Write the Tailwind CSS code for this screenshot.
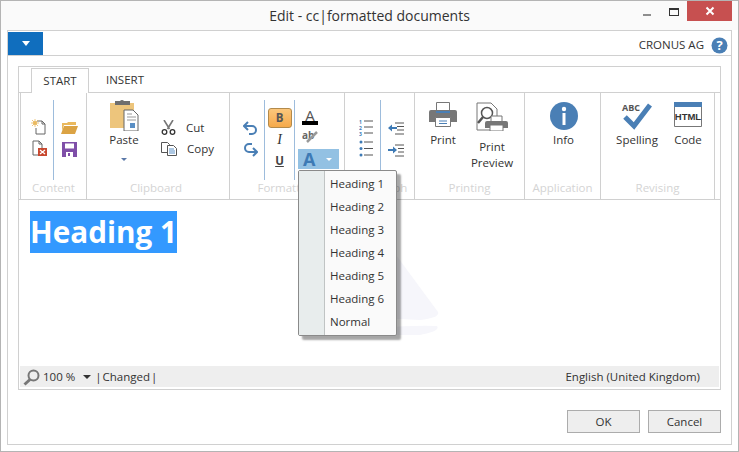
<!DOCTYPE html>
<html lang="en">
<head>
  <meta charset="UTF-8">
  <script src="https://cdn.jsdelivr.net/npm/@tailwindcss/browser@4"></script>
  <title>Edit - cc|formatted documents</title>
</head>
<body class="bg-white">
  <div class="w-[739px] h-[452px] flex flex-col bg-white border border-[#b4b4b4] font-['Open_Sans',sans-serif] text-[11.5px] text-[#333] overflow-hidden relative">

    <!-- title bar -->
    <div class="h-[29px] shrink-0 bg-[#fafafa] flex relative">
      <div class="flex-1 text-center text-[14px] leading-[29px] text-[#333]">Edit - cc|formatted documents</div>
      <div class="absolute right-[6px] top-0 flex items-start">
        <div class="w-[8px] h-[2px] mt-[13px] mr-[18px] bg-[#8e8e8e]"></div>
        <div class="w-[10px] h-[8px] mt-[7px] mr-[8px] border border-t-2 border-[#333]"></div>
        <div class="w-[45px] h-[20px] bg-[#c75050] flex items-center justify-center">
          <svg width="10" height="10" viewBox="0 0 10 10"><path d="M1.500 1.500l7 7M8.500 1.500l-7 7" stroke="#fff" stroke-width="2"/></svg>
        </div>
      </div>
    </div>

    <div class="mx-[6px] h-[415px] border border-[#d0d0d0] flex flex-col">
      <!-- header bar -->
      <div class="h-[25px] shrink-0 border-b border-[#d0d0d0] flex items-end relative">
        <div class="w-[35px] h-[23px] bg-[#106ebe] flex items-center justify-center">
          <div class="w-0 h-0 border-x-[4px] border-x-transparent border-t-[5px] border-t-white"></div>
        </div>
        <div class="flex-1"></div>
        <div class="flex items-center pr-[3px] h-[20px]">
          <span class="text-[#333] mr-[7px]">CRONUS AG</span>
          <svg width="17" height="17" viewBox="0 0 17 17"><circle cx="8.500" cy="8.500" r="8" fill="#4a7fb5"/><text x="8.500" y="13" text-anchor="middle" font-size="13" font-weight="700" fill="#fff" font-family="Open Sans">?</text></svg>
        </div>
      </div>

      <div class="mx-[10px] mt-[10px] h-[324px] border border-[#d0d0d0] flex flex-col">
        <!-- tabs -->
        <div class="h-[25px] shrink-0 flex pl-[12px] pt-[1px] relative">
          <div class="w-[58px] h-[25px] border border-b-0 border-[#d0d0d0] bg-white text-center leading-[24px] z-10">START</div>
          <div class="w-[72px] text-center leading-[24px]">INSERT</div>
        </div>
        <!-- ribbon -->
        <div class="h-[108px] shrink-0 border-t border-b border-[#d0d0d0] flex pl-[1px]">

          <!-- Content -->
          <div class="w-[67px] shrink-0 border-r border-l border-[#d0d0d0] flex flex-col">
            <div class="h-[87px] flex pt-[7px]">
              <div class="w-[32px] flex flex-col pl-[10px] pt-[19px] gap-[5px]">
                <svg width="16" height="16" viewBox="0 0 16 16"><path d="M6 2h5l3 3v10H5V9" fill="#fff" stroke="#666"/><path d="M11 2v3h3" fill="none" stroke="#666"/><circle cx="4" cy="4" r="2" fill="#eab95e"/><path d="M4 0v8M0 4h8M1 1l6 6M7 1L1 7" stroke="#eab95e" stroke-width=".8"/></svg>
                <svg width="16" height="17" viewBox="0 0 16 17" class="ml-[1px]"><path d="M1 1h6l3 3v11H1z" fill="#fff" stroke="#666"/><path d="M7 1v3h3" fill="none" stroke="#666"/><rect x="6" y="8" width="9" height="8" fill="#c8482f"/><path d="M8 10l5 4M13 10l-5 4" stroke="#fff" stroke-width="1.300"/></svg>
              </div>
              <div class="w-px h-[80px] bg-[#9dbcdc]"></div>
              <div class="flex flex-col pl-[7px] pt-[20px] gap-[8px]">
                <svg width="17" height="14" viewBox="0 0 17 14"><path d="M1 3h5l1-1h8v3H3L1 11z" fill="#eab95e"/><path d="M3 6h14l-3 8H0z" fill="#dba344"/></svg>
                <svg width="15" height="15" viewBox="0 0 15 15" class="ml-[1px]"><path d="M0 0h15v15H0z" fill="#7f4fa8"/><path d="M3 1.500h9v5H3z" fill="#fff"/><path d="M4 10h7v5H4z" fill="#fff"/><path d="M6 11h2v3H6z" fill="#7f4fa8"/></svg>
              </div>
            </div>
            <div class="text-center text-[#d4d4d4] leading-[16px]">Content</div>
          </div>

          <!-- Clipboard -->
          <div class="w-[143px] shrink-0 border-r border-[#d0d0d0] flex flex-col">
            <div class="h-[87px] flex pt-[7px]">
              <div class="w-[74px] flex flex-col items-center">
                <svg width="29" height="31" viewBox="0 0 29 31"><path d="M0 3h24v25H0z" fill="#edc57c"/><path d="M5 1h5a2.500 2.500 0 0 1 4 0h6v4H5z" fill="#6e6e6e"/><path d="M14 10h9l5 5v16H14z" fill="#fff" stroke="#666"/><path d="M17 14h5M17 17h9M17 20h9" stroke="#999"/><rect x="20" y="23" width="5" height="5" fill="#5a8fc5"/></svg>
                <div class="leading-[16px] mt-[1px]">Paste</div>
                <div class="w-0 h-0 mt-[10px] border-x-[3px] border-x-transparent border-t-[3px] border-t-[#5a78a8]"></div>
              </div>
              <div class="flex flex-col pt-[20px] gap-[6px]">
                <div class="flex items-center h-[15px]">
                  <svg width="15" height="15" viewBox="0 0 15 15"><path d="M3 0l5.500 9M12 0L6.500 9" stroke="#777" stroke-width="1.600"/><circle cx="3.500" cy="12" r="2.300" fill="none" stroke="#333" stroke-width="1.300"/><circle cx="11.500" cy="12" r="2.300" fill="none" stroke="#333" stroke-width="1.300"/></svg>
                  <span class="ml-[10px]">Cut</span>
                </div>
                <div class="flex items-center h-[15px]">
                  <svg width="16" height="14" viewBox="0 0 16 14"><path d="M.5.500h6l2 2v8H.5z" fill="#fff" stroke="#555"/><path d="M6.500 3.500h6l3 3v7h-9z" fill="#fff" stroke="#555"/><path d="M8 7h5M8 9h6M8 11h6" stroke="#5a8fc5"/></svg>
                  <span class="ml-[10px]">Copy</span>
                </div>
              </div>
            </div>
            <div class="text-center text-[#d4d4d4] leading-[16px] pr-[4px]">Clipboard</div>
          </div>

          <!-- Formatting -->
          <div class="w-[115px] shrink-0 border-r border-[#d0d0d0] flex flex-col">
            <div class="h-[87px] flex pt-[7px]">
              <div class="w-[34px] flex flex-col pl-[13px] pt-[21px] gap-[8px]">
                <svg width="15" height="14" viewBox="0 0 15 14"><path d="M5 1L1 5l4 4" fill="none" stroke="#4a7fb5" stroke-width="2"/><path d="M1 5h8a4 4 0 0 1 0 8H6" fill="none" stroke="#4a7fb5" stroke-width="2"/></svg>
                <svg width="15" height="14" viewBox="0 0 15 14"><path d="M10 5l4 4-4 4" fill="none" stroke="#4a7fb5" stroke-width="2"/><path d="M14 9H6a4 4 0 0 1 0-8h3" fill="none" stroke="#4a7fb5" stroke-width="2"/></svg>
              </div>
              <div class="w-px h-[80px] bg-[#9dbcdc]"></div>
              <div class="w-[29px] flex flex-col items-center pt-[8px]">
                <div class="w-[24px] h-[20px] rounded-[3px] border border-[#b28a4c] bg-linear-to-b from-[#fbc77c] to-[#f5a94a] text-center font-bold leading-[18px] text-[#555]">B</div>
                <div class="h-[21px] leading-[21px] mt-[1px] italic text-[14px] font-['Liberation_Serif',serif]">I</div>
                <div class="h-[21px] leading-[21px] font-bold underline text-[#444]">U</div>
              </div>
              <div class="w-px h-[80px] bg-[#9dbcdc]"></div>
              <div class="flex flex-col pl-[3px] pt-[9px]">
                <div class="w-[41px] flex flex-col items-start pl-[4px]">
                  <div class="text-[15px] leading-[12px] h-[12px] w-[16px] text-center text-[#555]">A</div>
                  <div class="w-[16px] h-[4px] bg-black"></div>
                  <svg width="17" height="14" viewBox="0 0 17 14" class="mt-[4px]"><text x="0" y="10" font-size="10" font-weight="700" fill="#666" font-family="Open Sans">ab</text><path d="M5 13L15 3" stroke="#999" stroke-width="2.500"/></svg>
                </div>
                <div class="w-[41px] h-[20px] mt-[6px] bg-[#93c1e3] flex items-center pl-[5px]">
                  <span class="text-[18px] leading-[20px] font-bold text-[#3d7ab5]">A</span>
                  <div class="ml-[11px] w-0 h-0 border-x-[3px] border-x-transparent border-t-[3px] border-t-white"></div>
                </div>
              </div>
            </div>
            <div class="text-center text-[#d4d4d4] leading-[16px]">Formatting</div>
          </div>

          <!-- Paragraph -->
          <div class="w-[70px] shrink-0 border-r border-[#d0d0d0] flex flex-col">
            <div class="h-[87px] flex pt-[7px]">
              <div class="w-[35px] flex flex-col pl-[14px] pt-[19px] gap-[4px]">
                <svg width="14" height="17" viewBox="0 0 14 17"><text x="0" y="5" font-size="5" font-weight="700" fill="#3d7ab5" font-family="Open Sans">1</text><text x="0" y="11" font-size="5" font-weight="700" fill="#3d7ab5" font-family="Open Sans">2</text><text x="0" y="17" font-size="5" font-weight="700" fill="#3d7ab5" font-family="Open Sans">3</text><path d="M5 2h9M5 8h9M5 14h9" stroke="#555"/></svg>
                <svg width="14" height="17" viewBox="0 0 14 17"><circle cx="2" cy="2" r="1.500" fill="#3d7ab5"/><circle cx="2" cy="8.500" r="1.500" fill="#3d7ab5"/><circle cx="2" cy="15" r="1.500" fill="#3d7ab5"/><path d="M5 2h9M5 8.500h9M5 15h9" stroke="#555"/></svg>
              </div>
              <div class="w-px h-[80px] bg-[#9dbcdc]"></div>
              <div class="flex flex-col pl-[7px] pt-[22px] gap-[9px]">
                <svg width="16" height="13" viewBox="0 0 16 13"><path d="M7 1h9M9 4.500h7M9 8h7M7 12h9" stroke="#555"/><path d="M0 6l4-3.500v2.500h5v2H4v2.500z" fill="#3d7ab5"/></svg>
                <svg width="16" height="13" viewBox="0 0 16 13"><path d="M7 1h9M10 4.500h6M10 8h6M7 12h9" stroke="#555"/><path d="M9 6L5 2.500V5H0v2h5v2.500z" fill="#3d7ab5"/></svg>
              </div>
            </div>
            <div class="text-center text-[#d4d4d4] leading-[16px]">Paragraph</div>
          </div>

          <!-- Printing -->
          <div class="w-[110px] shrink-0 border-r border-[#d0d0d0] flex flex-col">
            <div class="h-[87px] flex pt-[9px]">
              <div class="w-[56px] flex flex-col items-center">
                <svg width="28" height="25" viewBox="0 0 28 25"><path d="M7.500.500h13v8h-13z" fill="#fff" stroke="#777"/><path d="M2 8h24a2 2 0 0 1 2 2v10H0V10a2 2 0 0 1 2-2z" fill="#777"/><path d="M7 9h14v2H7z" fill="#4a7fb5"/><path d="M6.500 15.500h15v9h-15z" fill="#fff" stroke="#777"/><path d="M10 19h8M10 21.500h8" stroke="#4a7fb5"/></svg>
                <div class="mt-[5px] leading-[16px]">Print</div>
              </div>
              <div class="flex flex-col items-center w-[40px] pl-[2px]">
                <svg width="32" height="29" viewBox="0 0 32 29"><path d="M1 1h14l6 6v21H1z" fill="#fff" stroke="#777"/><circle cx="11" cy="11" r="5.500" fill="#fff" stroke="#555" stroke-width="1.500"/><path d="M7 15l-5 6" stroke="#555" stroke-width="2.500"/><path d="M15 14h11v6H15z" fill="#fff" stroke="#777"/><path d="M11 19h19a2 2 0 0 1 2 2v5H9v-5a2 2 0 0 1 2-2z" fill="#777"/><path d="M14 23h13v6H14z" fill="#fff" stroke="#777"/></svg>
                <div class="mt-[8px] text-center leading-[16px]">Print<br>Preview</div>
              </div>
            </div>
            <div class="text-center text-[#d4d4d4] leading-[16px]">Printing</div>
          </div>

          <!-- Application -->
          <div class="w-[76px] shrink-0 border-r border-[#d0d0d0] flex flex-col">
            <div class="h-[87px] flex flex-col items-center pt-[9px] pl-[2px]">
              <svg width="28" height="28" viewBox="0 0 28 28"><circle cx="14" cy="14" r="14" fill="#4a7fb5"/><circle cx="14" cy="7" r="2.200" fill="#fff"/><path d="M12.500 11h3v12h-3z" fill="#fff"/></svg>
              <div class="mt-[2px] leading-[16px]">Info</div>
            </div>
            <div class="text-center text-[#d4d4d4] leading-[16px]">Application</div>
          </div>

          <!-- Revising -->
          <div class="w-[114px] shrink-0 border-r border-[#d0d0d0] flex flex-col">
            <div class="h-[87px] flex pt-[9px]">
              <div class="w-[72px] flex flex-col items-center">
                <svg width="32" height="28" viewBox="0 0 32 28"><text x="1" y="9" font-size="9" font-weight="700" fill="#555" font-family="Open Sans">ABC</text><path d="M4 15l9 9L29 3" fill="none" stroke="#4a7fb5" stroke-width="5"/></svg>
                <div class="mt-[2px] leading-[16px]">Spelling</div>
              </div>
              <div class="w-[28px] flex flex-col items-center ml-[1px]">
                <svg width="28" height="25" viewBox="0 0 28 25"><path d="M.5.500h27v24H.5z" fill="#fff" stroke="#777"/><path d="M0 0h28v5H0z" fill="#4a7fb5"/><text x="14" y="18" text-anchor="middle" font-size="9.500" font-weight="600" fill="#333" font-family="Liberation Sans">HTML</text></svg>
                <div class="mt-[5px] leading-[16px]">Code</div>
              </div>
            </div>
            <div class="text-center text-[#d4d4d4] leading-[16px]">Revising</div>
          </div>
        </div>

        <!-- editor -->
        <div class="flex-1 relative bg-white pl-[11px] pt-[11px] overflow-hidden">
          <svg class="absolute left-[360px] top-[40px]" width="70" height="100" viewBox="0 0 70 100"><path d="M6 0L59 72q2 6-18 8L0 78V5zM0 88q35-3 58-2 4 5-17 9H0z" fill="#f6f6fb"/></svg>
          <span class="relative inline-block h-[42px] bg-[#3399ff] text-white font-bold text-[29.7px] leading-[42px]">Heading 1</span>
        </div>

        <!-- status bar -->
        <div class="h-[21px] shrink-0 mx-[1px] mb-[2px] pt-[1px] bg-[#eeeeee] flex items-center pl-[3px] pr-[19px] leading-[20px]">
          <svg width="17" height="17" viewBox="0 0 17 17"><circle cx="10.500" cy="6.500" r="5" fill="none" stroke="#777" stroke-width="2"/><path d="M7 10.500L1.500 15.500" stroke="#777" stroke-width="3"/></svg>
          <span class="ml-[3px]">100 %</span>
          <div class="ml-[8px] w-0 h-0 border-x-[4px] border-x-transparent border-t-[4px] border-t-[#333]"></div>
          <span class="ml-[4px] [word-spacing:-2px]">| Changed |</span>
          <span class="ml-auto">English (United Kingdom)</span>
        </div>
      </div>

      <!-- dialog buttons -->
      <div class="flex justify-end gap-[8px] pr-[10px] mt-[20px]">
        <div class="w-[73px] h-[23px] border border-[#acacac] bg-[#eeeeee] text-center leading-[21px]">OK</div>
        <div class="w-[73px] h-[23px] border border-[#acacac] bg-[#eeeeee] text-center leading-[21px]">Cancel</div>
      </div>
    </div>

    <!-- style dropdown -->
    <div class="absolute left-[297px] top-[169px] w-[99px] h-[166px] bg-[#fafafa] border border-[#8a8a8a] rounded-[2px] shadow-[4px_4px_2px_rgba(0,0,0,0.35)] flex">
      <div class="w-[26px] bg-[#e8eded] border-r border-[#c0c4c4]"></div>
      <div class="flex-1 pl-[5px] pt-[1px] flex flex-col text-[#333] leading-[23px]">
        <div>Heading 1</div>
        <div>Heading 2</div>
        <div>Heading 3</div>
        <div>Heading 4</div>
        <div>Heading 5</div>
        <div>Heading 6</div>
        <div>Normal</div>
      </div>
    </div>
  </div>
</body>
</html>
